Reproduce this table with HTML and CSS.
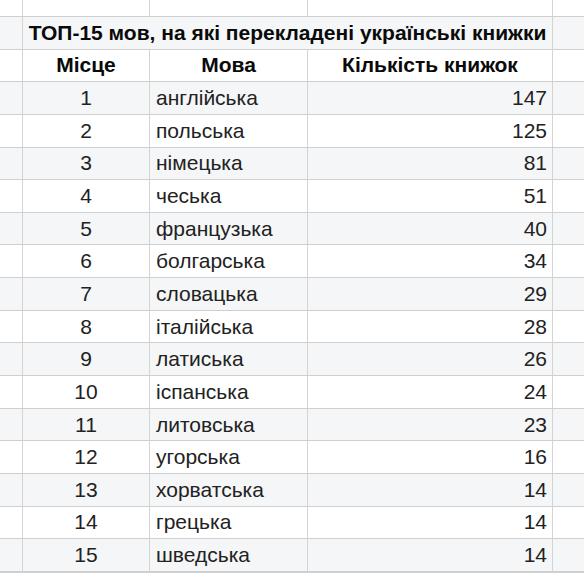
FILE: index.html
```html
<!DOCTYPE html>
<html lang="uk">
<head>
<meta charset="utf-8">
<link rel="stylesheet" href="styles.css">
</head>
<body>
<div class="sheet">
  <div class="c"></div><div class="c"></div><div class="c"></div><div class="c"></div><div class="c"></div>

  <div class="c band"></div><div class="c band title span3">ТОП-15 мов, на які перекладені українські книжки</div><div class="c band"></div>

  <div class="c"></div><div class="c head center">Місце</div><div class="c head center">Мова</div><div class="c head center">Кількість книжок</div><div class="c"></div>

  <div class="c band"></div><div class="c band center">1</div><div class="c band">англійська</div><div class="c band right">147</div><div class="c band"></div>
  <div class="c"></div><div class="c center">2</div><div class="c">польська</div><div class="c right">125</div><div class="c"></div>
  <div class="c band"></div><div class="c band center">3</div><div class="c band">німецька</div><div class="c band right">81</div><div class="c band"></div>
  <div class="c"></div><div class="c center">4</div><div class="c">чеська</div><div class="c right">51</div><div class="c"></div>
  <div class="c band"></div><div class="c band center">5</div><div class="c band">французька</div><div class="c band right">40</div><div class="c band"></div>
  <div class="c"></div><div class="c center">6</div><div class="c">болгарська</div><div class="c right">34</div><div class="c"></div>
  <div class="c band"></div><div class="c band center">7</div><div class="c band">словацька</div><div class="c band right">29</div><div class="c band"></div>
  <div class="c"></div><div class="c center">8</div><div class="c">італійська</div><div class="c right">28</div><div class="c"></div>
  <div class="c band"></div><div class="c band center">9</div><div class="c band">латиська</div><div class="c band right">26</div><div class="c band"></div>
  <div class="c"></div><div class="c center">10</div><div class="c">іспанська</div><div class="c right">24</div><div class="c"></div>
  <div class="c band"></div><div class="c band center">11</div><div class="c band">литовська</div><div class="c band right">23</div><div class="c band"></div>
  <div class="c"></div><div class="c center">12</div><div class="c">угорська</div><div class="c right">16</div><div class="c"></div>
  <div class="c band"></div><div class="c band center">13</div><div class="c band">хорватська</div><div class="c band right">14</div><div class="c band"></div>
  <div class="c"></div><div class="c center">14</div><div class="c">грецька</div><div class="c right">14</div><div class="c"></div>
  <div class="c band"></div><div class="c band center">15</div><div class="c band">шведська</div><div class="c band right">14</div><div class="c band"></div>
  <div class="c"></div><div class="c"></div><div class="c"></div><div class="c"></div><div class="c"></div>
</div>
</body>
</html>
```

FILE: styles.css
```css
html, body {
  margin: 0;
  padding: 0;
  background: #ffffff;
}
body {
  width: 584px;
  height: 578px;
  overflow: hidden;
}
.sheet {
  display: grid;
  grid-template-columns: 23px 127px 158px 245px 32px;
  grid-template-rows: 17px repeat(17, 32.65px);
  font-family: "Liberation Sans", Arial, sans-serif;
  font-size: 21px;
  color: #222222;
}
.c {
  box-sizing: border-box;
  border-right: 1px solid #d4d4d4;
  border-bottom: 1px solid #cfcfcf;
  display: flex;
  align-items: center;
  padding: 0 6px;
  white-space: nowrap;
  overflow: visible;
}
.band {
  background: #f5f6f7;
}
.span3 {
  grid-column: span 3;
}
.title {
  justify-content: center;
  font-weight: bold;
  color: #0a0a0a;
}
.head {
  font-weight: bold;
  color: #0a0a0a;
}
.center {
  justify-content: center;
}
.right {
  justify-content: flex-end;
  padding-right: 5px;
}
```
